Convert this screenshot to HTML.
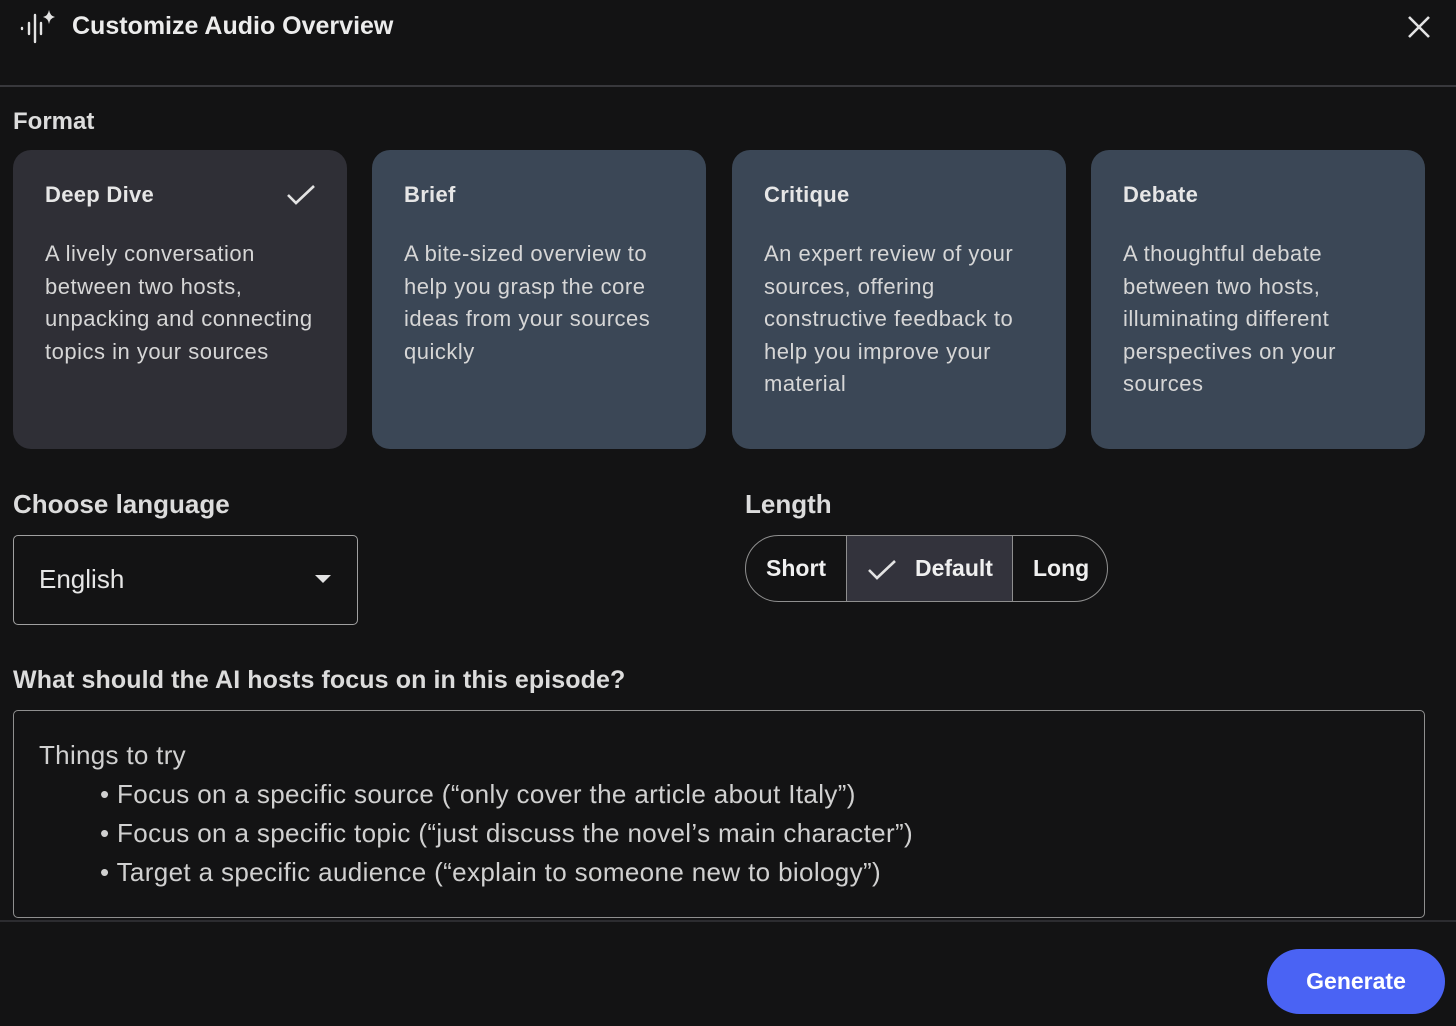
<!DOCTYPE html>
<html><head><style>
*{box-sizing:border-box;margin:0;padding:0}
body{width:1456px;height:1026px;background:#131314;color:#e3e3e3;font-family:"Liberation Sans",sans-serif;position:relative;overflow:hidden}
.abs{position:absolute}
.card{position:absolute;top:150px;width:334px;height:299px;border-radius:18px;background:#3b4756;padding:30px 12px 30px 32px}
.card.sel{background:#2f2f36}
.card h3{font-size:22px;font-weight:bold;color:#e6e6e6;line-height:30px;margin-bottom:28px;letter-spacing:0.3px}
.card p{font-size:22px;line-height:32.5px;color:#d6d6d6;letter-spacing:0.5px}
.lbl{position:absolute;font-size:25px;font-weight:bold;color:#dcdcdc}
</style></head><body>
<svg class="abs" style="left:18px;top:8px" width="40" height="38" viewBox="0 0 40 38">
<g stroke="#e3e3e3" stroke-width="2.4" stroke-linecap="round">
<line x1="4" y1="20" x2="4" y2="21"/><line x1="11" y1="15" x2="11" y2="26"/><line x1="17" y1="7" x2="17" y2="34"/><line x1="23" y1="15" x2="23" y2="26"/></g>
<path d="M31 2 Q32 8 37 9 Q32 10 31 16 Q30 10 25 9 Q30 8 31 2Z" fill="#e3e3e3"/>
</svg>
<div class="abs" style="left:72px;top:12px;font-size:25px;font-weight:bold;color:#ececec">Customize Audio Overview</div>
<svg class="abs" style="left:1406px;top:14px" width="26" height="26" viewBox="0 0 26 26"><path d="M3 3L23 23M23 3L3 23" stroke="#e3e3e3" stroke-width="2.6"/></svg>
<div class="abs" style="left:0;top:85px;width:1456px;height:2px;background:#38383c"></div>
<div class="lbl" style="left:13px;top:108px;font-size:24px">Format</div>
<div class="card sel" style="left:13px"><h3>Deep Dive</h3><p>A lively conversation between two hosts,<br>unpacking and connecting topics in your sources</p>
<svg class="abs" style="left:273px;top:33px" width="30" height="24" viewBox="0 0 30 24"><path d="M2 12L10 20L28 3" stroke="#e3e3e3" stroke-width="2.6" fill="none"/></svg></div>
<div class="card" style="left:372px"><h3>Brief</h3><p>A bite-sized overview to help you grasp the core ideas from your sources quickly</p></div>
<div class="card" style="left:732px"><h3>Critique</h3><p>An expert review of your sources, offering constructive feedback to help you improve your material</p></div>
<div class="card" style="left:1091px"><h3>Debate</h3><p>A thoughtful debate between two hosts, illuminating different perspectives on your sources</p></div>
<div class="lbl" style="left:13px;top:489px;font-size:26px">Choose language</div>
<div class="abs" style="left:13px;top:535px;width:345px;height:90px;border:1.5px solid #a0a0a0;border-radius:5px"></div>
<div class="abs" style="left:39px;top:564px;font-size:26px;color:#e6e6e6">English</div>
<svg class="abs" style="left:315px;top:575px" width="16" height="9"><path d="M0 0H16L8 8Z" fill="#e3e3e3"/></svg>
<div class="lbl" style="left:745px;top:489px;font-size:26px">Length</div>
<div class="abs" style="left:745px;top:535px;width:363px;height:67px;border:1.5px solid #8f8f8f;border-radius:34px;overflow:hidden">
<div class="abs" style="left:100px;top:0;width:167px;height:67px;background:#33333c;border-left:1.5px solid #8f8f8f;border-right:1.5px solid #8f8f8f"></div>
<div class="abs" style="left:20px;top:19px;font-size:23px;font-weight:bold;color:#f0f0f0">Short</div>
<svg class="abs" style="left:121px;top:22px" width="30" height="24" viewBox="0 0 30 24"><path d="M2 12L10 20L28 3" stroke="#e3e3e3" stroke-width="2.6" fill="none"/></svg>
<div class="abs" style="left:169px;top:19px;font-size:23px;font-weight:bold;color:#f0f0f0">Default</div>
<div class="abs" style="left:287px;top:19px;font-size:23px;font-weight:bold;color:#f0f0f0">Long</div>
</div>
<div class="lbl" style="left:13px;top:666px;letter-spacing:0.1px">What should the AI hosts focus on in this episode?</div>
<div class="abs" style="left:13px;top:710px;width:1412px;height:208px;border:1.5px solid #8f8f8f;border-radius:5px"></div>
<div class="abs" style="left:39px;top:736px;font-size:26px;color:#d0d0d0;line-height:39px;letter-spacing:0.3px">Things to try
<div style="padding-left:61px;letter-spacing:0.36px">• Focus on a specific source (“only cover the article about Italy”)<br>• Focus on a specific topic (“just discuss the novel’s main character”)<br>• Target a specific audience (“explain to someone new to biology”)</div></div>
<div class="abs" style="left:0;top:920px;width:1456px;height:2px;background:#2c2c30"></div>
<div class="abs" style="left:1267px;top:949px;width:178px;height:65px;border-radius:33px;background:#4a63f4;color:#fff;font-size:23px;font-weight:bold;text-align:center;line-height:65px">Generate</div>
</body></html>
